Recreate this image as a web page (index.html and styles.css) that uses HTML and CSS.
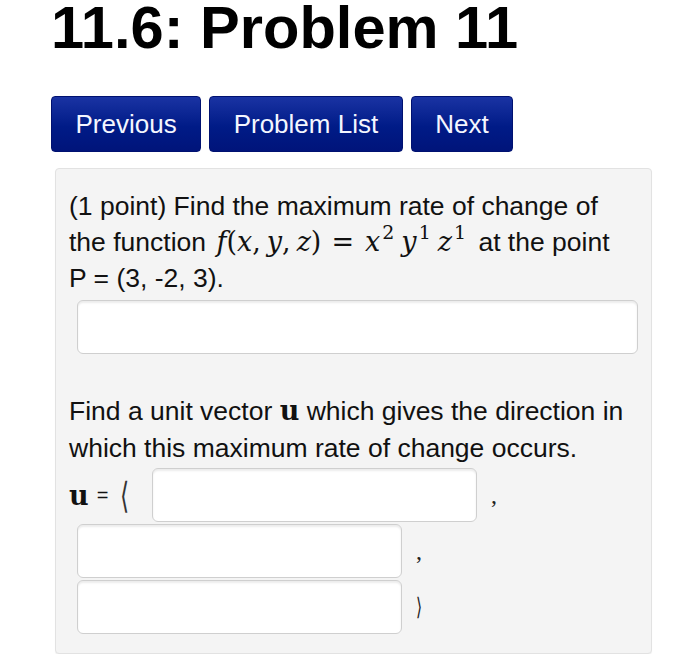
FILE: index.html
```html
<!DOCTYPE html>
<html lang="en">
<head>
<meta charset="utf-8">
<title>11.6: Problem 11</title>
<link rel="stylesheet" href="styles.css">
</head>
<body>
<div class="page">
  <h1 class="title">11.6: Problem 11</h1>
  <nav class="nav">
    <a class="btn">Previous</a>
    <a class="btn">Problem List</a>
    <a class="btn">Next</a>
  </nav>
  <div class="problem">
    <p class="q">(1 point) Find the maximum rate of change of<br>the function <span class="math"><i>f</i><span class="op">(</span><i>x</i><span class="cm">,</span><i>y</i><span class="cm">,</span><i>z</i><span class="op">)</span><span class="eq">=</span><i>x</i><sup>2</sup><i>y</i><sup>1</sup><i>z</i><sup>1</sup></span> at the point<br>P = (3, -2, 3).</p>
    <div class="row-wide"><input class="field field-wide" type="text"></div>
    <p class="q q2">Find a unit vector <b class="bu">u</b> which gives the direction in<br>which this maximum rate of change occurs.</p>
    <div class="vec">
      <div class="vrow vrow-first">
        <span class="lead"><b class="bu">u</b><span class="veq">=</span><span class="ang">⟨</span></span>
        <input class="field field-vec" type="text">
        <span class="sep">,</span>
      </div>
      <div class="vrow">
        <input class="field field-vec" type="text">
        <span class="sep">,</span>
      </div>
      <div class="vrow">
        <input class="field field-vec" type="text">
        <span class="sep ang">⟩</span>
      </div>
    </div>
  </div>
</div>
</body>
</html>
```
FILE: styles.css
```css
html, body {
  margin: 0;
  padding: 0;
  background: #ffffff;
}
body {
  font-family: "Liberation Sans", Arial, Helvetica, sans-serif;
  color: #111;
}
.page {
  padding-left: 51px;
  width: 602px;
}
.title {
  font-size: 59.6px;
  font-weight: bold;
  line-height: 55px;
  margin: 0 0 0 0;
  color: #000;
}
.nav {
  display: flex;
  gap: 8px;
  margin-top: 41px;
}
.btn {
  display: flex;
  align-items: center;
  height: 54px;
  padding: 0 23.5px;
  font-size: 26px;
  color: #f4f6ff;
  background: linear-gradient(#1a33a3, #001b87 55%, #00147a);
  border: 1px solid #001170;
  border-radius: 4px;
}
.problem {
  margin-top: 16px;
  margin-left: 4px;
  width: 569px;
  background: #f4f4f4;
  border: 1px solid #e2e2e2;
  border-radius: 4px;
  padding: 19px 13px 19px 13px;
  box-shadow: 0 1px 1px rgba(0,0,0,0.06);
}
.q {
  margin: 0;
  font-size: 26.5px;
  line-height: 36px;
  color: #111;
  white-space: nowrap;
}
.q2 {
  margin-top: 38px;
  line-height: 37px;
}
.math {
  font-family: "DejaVu Serif", "Liberation Serif", serif;
  font-size: 27px;
  line-height: 0;
  margin-left: 3px;
  margin-right: 5px;
}
.math i {
  font-style: italic;
}
.math .op {
  font-style: normal;
}
.math .cm {
  margin-right: 6px;
}
.math sup {
  font-size: 19px;
  font-style: normal;
  line-height: 0;
  vertical-align: 12px;
  margin-left: 2px;
  margin-right: 7px;
}
.math sup:last-child {
  margin-right: 0;
}
.eq {
  margin: 0 11px 0 10px;
}
.bu {
  font-family: "DejaVu Serif", "Liberation Serif", serif;
  font-weight: bold;
  font-size: 27px;
}
.row-wide {
  display: flex;
  margin-top: 4px;
  padding-left: 8px;
}
.field {
  display: block;
  box-sizing: border-box;
  height: 54px;
  margin: 0;
  background: #fff;
  border: 1px solid #cfcfcf;
  border-radius: 6px;
  box-shadow: inset 0 2px 2px rgba(0,0,0,0.08);
  font-size: 20px;
  outline: none;
}
.field-wide {
  width: 561px;
}
.field-vec {
  width: 325px;
}
.vec {
  display: flex;
  flex-direction: column;
  gap: 2px;
  margin-top: 1px;
}
.vrow {
  display: flex;
  align-items: center;
  padding-left: 8px;
}
.vrow-first {
  padding-left: 0;
}
.lead {
  display: flex;
  align-items: center;
  width: 83px;
}
.veq {
  font-size: 20px;
  margin: 0 10px 0 8px;
}
.ang {
  font-family: "DejaVu Sans", sans-serif;
  font-size: 36px;
  font-weight: 200;
  color: #333;
  display: inline-block;
  transform: scaleX(0.65);
}
.sep {
  margin-left: 14px;
  font-family: "Liberation Serif", serif;
  font-size: 24px;
  color: #222;
}
.sep.ang {
  margin-left: 12px;
}
```
